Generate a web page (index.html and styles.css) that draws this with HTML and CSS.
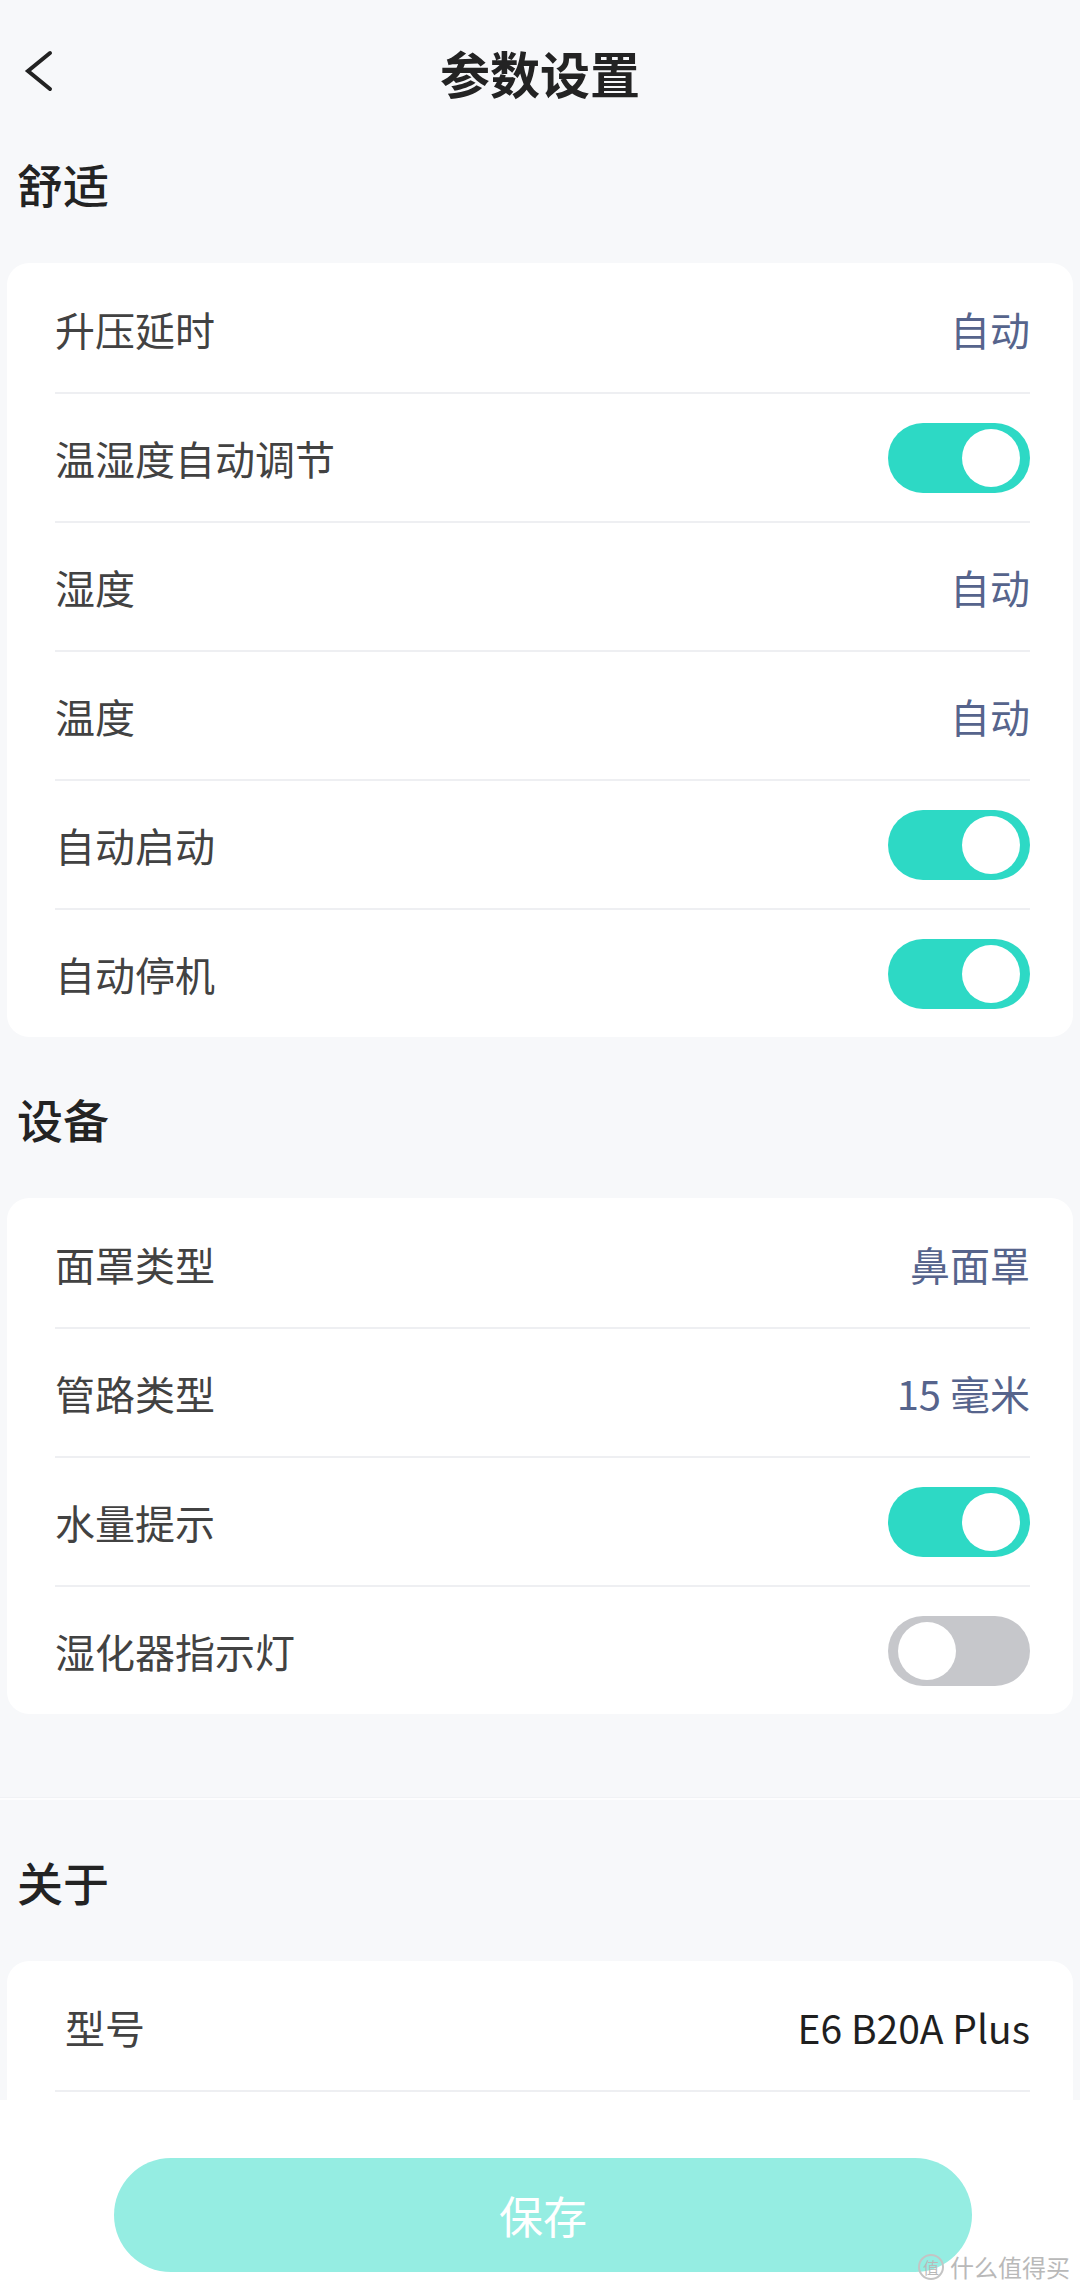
FILE: index.html
```html
<!DOCTYPE html>
<html lang="zh-CN">
<head>
  <meta charset="UTF-8" />
  <title>参数设置</title>
  <link rel="stylesheet" href="styles.css">
</head>
<body>

  <header class="topbar">
    <span class="back">
      <svg width="32" height="46" viewBox="0 0 32 46">
        <polyline points="27,4 5,22 27,40" fill="none" stroke="#222" stroke-width="4" stroke-linecap="round" stroke-linejoin="miter"/>
      </svg>
    </span>
    <h1>参数设置</h1>
    <span></span>
  </header>

  <h2 class="group-title">舒适</h2>
  <section class="card">
    <div class="row"><span class="label">升压延时</span><span class="value">自动</span></div>
    <div class="row"><span class="label">温湿度自动调节</span><span class="switch on"></span></div>
    <div class="row"><span class="label">湿度</span><span class="value">自动</span></div>
    <div class="row"><span class="label">温度</span><span class="value">自动</span></div>
    <div class="row"><span class="label">自动启动</span><span class="switch on"></span></div>
    <div class="row"><span class="label">自动停机</span><span class="switch on"></span></div>
  </section>

  <h2 class="group-title">设备</h2>
  <section class="card">
    <div class="row"><span class="label">面罩类型</span><span class="value">鼻面罩</span></div>
    <div class="row"><span class="label">管路类型</span><span class="value">15 毫米</span></div>
    <div class="row"><span class="label">水量提示</span><span class="switch on"></span></div>
    <div class="row"><span class="label">湿化器指示灯</span><span class="switch"></span></div>
  </section>

  <div class="band"></div>

  <h2 class="group-title">关于</h2>
  <section class="card card-about">
    <div class="row divided"><span class="label indent">型号</span><span class="value dark">E6 B20A Plus</span></div>
  </section>

  <footer class="bottombar">
    <button class="save">保存</button>
    <span class="mark"><i>值</i>什么值得买</span>
  </footer>

</body>
</html>
```

FILE: styles.css
```css
html, body {
  margin: 0;
  padding: 0;
}
body {
  width: 1080px;
  height: 2293px;
  overflow: hidden;
  background: #f7f8fa;
  font-family: "Noto Sans CJK SC", "Noto Sans", sans-serif;
  color: #3c3c3c;
  position: relative;
}
.topbar {
  display: grid;
  grid-template-columns: 1fr auto 1fr;
  align-items: center;
  height: 102px;
  padding-top: 42px;
  box-sizing: border-box;
}
.topbar .back {
  display: flex;
  padding-left: 23px;
}
.topbar h1 {
  margin: 0;
  font-size: 50px;
  line-height: 60px;
  font-weight: 700;
  color: #232323;
}
.group-title {
  margin: 0;
  padding: 51px 0 50px 17px;
  font-size: 46px;
  line-height: 60px;
  font-weight: 500;
  color: #232323;
}
.card {
  margin: 0 7px;
  background: #fff;
  border-radius: 22px;
  padding: 2px 43px 0 48px;
}
.row {
  height: 127px;
  display: flex;
  align-items: center;
  justify-content: space-between;
  border-bottom: 2px solid #eeeff2;
}
.card .row:last-child { border-bottom: none; }
.card .row.divided { border-bottom: 2px solid #eeeff2; }
.label {
  font-size: 40px;
  color: #424242;
}
.label.indent { padding-left: 10px; }
.value {
  font-size: 40px;
  color: #56648c;
}
.value.dark {
  color: #1f1f1f;
  font-size: 39px;
}
.switch {
  width: 142px;
  height: 70px;
  border-radius: 35px;
  background: #c6c7cb;
  position: relative;
  flex: none;
}
.switch::after {
  content: "";
  position: absolute;
  top: 6px;
  left: 10px;
  width: 58px;
  height: 58px;
  border-radius: 50%;
  background: #fff;
}
.switch.on { background: #2dd9c5; }
.switch.on::after { left: auto; right: 10px; }
.band {
  height: 84px;
  border-bottom: 2px solid #fdfdfe;
  box-shadow: 0 -1px 0 #f1f2f5 inset;
}
.card-about {
  padding-bottom: 8px;
  border-radius: 22px 22px 0 0;
}
.bottombar {
  position: absolute;
  left: 0;
  right: 0;
  bottom: 0;
  height: 193px;
  background: #fff;
  display: flex;
  justify-content: center;
  align-items: flex-start;
}
.save {
  margin-top: 58px;
  width: 858px;
  height: 114px;
  border: none;
  border-radius: 57px;
  background: #95ede2;
  color: #fff;
  font-family: "Noto Sans CJK SC", sans-serif;
  font-size: 44px;
  margin-left: 6px;
}
.mark {
  position: absolute;
  right: 10px;
  bottom: 9px;
  font-size: 24px;
  color: #b9b9b9;
  display: flex;
  align-items: center;
  gap: 6px;
}
.mark i {
  font-style: normal;
  font-size: 16px;
  width: 26px;
  height: 26px;
  border: 2px solid #c4c4c4;
  border-radius: 50%;
  display: flex;
  align-items: center;
  justify-content: center;
  box-sizing: border-box;
}
```
